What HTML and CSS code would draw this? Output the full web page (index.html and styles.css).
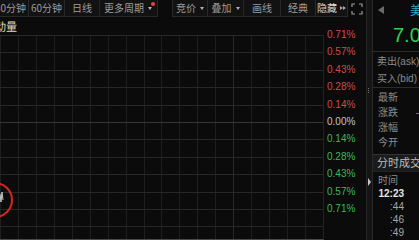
FILE: index.html
```html
<!DOCTYPE html>
<html lang="zh-CN">
  <head>
    <meta charset="UTF-8" />
    <title>分时图</title>
    <link rel="stylesheet" href="styles.css">
  </head>
  <body>
    <div class="app">
      <div class="main">
        <div class="toolbar">
          <span class="tb w36">30分钟</span>
          <span class="tb w36">60分钟</span>
          <span class="tb w35">日线</span>
          <span class="tb w58 more">更多周期<i class="caret"></i><i class="dot"></i></span>
          <span class="tb w35 gap">竞价<i class="caret"></i></span>
          <span class="tb w36">叠加<i class="caret"></i></span>
          <span class="tb w37">画线</span>
          <span class="tb w35">经典</span>
          <span class="tb w32 hide">隐藏<i class="ff"></i><i class="ff"></i></span>
          <span class="full">
            <svg width="12" height="12" viewBox="0 0 12 12">
              <path d="M1 4V1h3M8 1h3v3M11 8v3H8M4 11H1V8" fill="none" stroke="#9a9a9a" stroke-width="1.2"/>
            </svg>
          </span>
        </div>
        <div class="chart">
          <div class="plot">
            <div class="pane-title">动量</div>
            <div class="grid"></div>
            <svg class="mark" width="40" height="40" viewBox="0 0 40 40">
              <circle cx="15" cy="20" r="17" fill="none" stroke="#d8261e" stroke-width="2"/>
              <polyline points="8,23 12,19 14,24 16,21 18,6 19,18 20,14 21,22 22,12 23,20" fill="none" stroke="#c8c8c8" stroke-width="1"/>
            </svg>
          </div>
          <div class="axis">
            <div class="lbl up">0.71%</div>
            <div class="lbl up">0.57%</div>
            <div class="lbl up">0.43%</div>
            <div class="lbl up">0.28%</div>
            <div class="lbl up">0.14%</div>
            <div class="lbl zero">0.00%</div>
            <div class="lbl down">0.14%</div>
            <div class="lbl down">0.28%</div>
            <div class="lbl down">0.43%</div>
            <div class="lbl down">0.57%</div>
            <div class="lbl down">0.71%</div>
          </div>
        </div>
      </div>
      <div class="divider">
        <i class="grip"></i>
        <i class="pull"></i>
      </div>
      <div class="side">
        <div class="head"><i class="back"></i><span class="name">美</span></div>
        <div class="price">7.0</div>
        <div class="quote">
          <div class="q-row">卖出(ask)</div>
          <div class="q-row">买入(bid)</div>
        </div>
        <div class="info">
          <div class="i-row"><span class="k">最新</span></div>
          <div class="i-row"><span class="k">涨跌</span><span class="v down">-</span></div>
          <div class="i-row"><span class="k">涨幅</span></div>
          <div class="i-row"><span class="k">今开</span></div>
        </div>
        <div class="tab">分时成交</div>
        <div class="trades">
          <div class="t-row t-head">时间</div>
          <div class="t-row t-min">12:23</div>
          <div class="t-row">:44</div>
          <div class="t-row">:46</div>
          <div class="t-row">:49</div>
        </div>
      </div>
    </div>
  </body>
</html>
```

FILE: styles.css
```css
body {
  margin: 0;
  background-color: #0b0b0b;
  font-family: "Noto Sans CJK SC", "Liberation Sans", sans-serif;
  color: #9c9c9c;
  overflow: hidden;
}
.app {
  display: flex;
  width: 419px;
  height: 240px;
  overflow: hidden;
}
.main {
  width: 366px;
  flex-shrink: 0;
  display: flex;
  flex-direction: column;
}
.toolbar {
  display: flex;
  height: 17px;
  margin-left: -8px;
  margin-bottom: 2px;
}
.tb {
  position: relative;
  box-sizing: border-box;
  height: 17px;
  margin-right: -1px;
  border: 1px solid #282828;
  border-top: none;
  background-color: #121212;
  display: flex;
  align-items: center;
  justify-content: center;
  font-size: 10px;
  line-height: 1;
  flex-shrink: 0;
}
.w32 { width: 33px; }
.w35 { width: 36px; }
.w36 { width: 37px; }
.w37 { width: 38px; }
.w58 { width: 59px; }
.tb.gap {
  margin-left: 15px;
}
.caret {
  width: 0;
  height: 0;
  margin-left: 4px;
  border-left: 2px solid transparent;
  border-right: 2px solid transparent;
  border-top: 3px solid #b0b0b0;
}
.more {
  justify-content: flex-start;
  padding-left: 4px;
}
.dot {
  position: absolute;
  top: 2px;
  right: 2px;
  width: 4px;
  height: 4px;
  border-radius: 50%;
  background-color: #ee4038;
}
.hide {
  color: #d8d8d8;
}
.ff {
  width: 0;
  height: 0;
  border-top: 2.5px solid transparent;
  border-bottom: 2.5px solid transparent;
  border-left: 3px solid #a8a8a8;
}
.ff:first-of-type {
  margin-left: 3px;
}
.full {
  width: 19px;
  display: flex;
  align-items: center;
  justify-content: center;
  margin-left: 1px;
}
.chart {
  flex: 1;
  display: flex;
}
.plot {
  position: relative;
  width: 324px;
  display: flex;
  flex-direction: column;
}
.pane-title {
  height: 16px;
  line-height: 14px;
  font-size: 11px;
  color: #e2dab6;
  margin-left: -5px;
}
.grid {
  flex: 1;
  border-right: 1px solid #222;
  border-bottom: 1px solid #4a4a4a;
  background:
    linear-gradient(#363636, #363636) 0 87px / 100% 1px no-repeat,
    linear-gradient(#2a2a2a, #2a2a2a) 233px 0 / 1px 100% no-repeat,
    repeating-linear-gradient(to bottom, #272727 0, #272727 1px, transparent 1px, transparent 17.4px),
    repeating-linear-gradient(to right, #1e1e1e 0, #1e1e1e 1px, transparent 1px, transparent 17.94px);
}
.mark {
  position: absolute;
  left: -20px;
  top: 161px;
}
.axis {
  flex: 1;
  padding-top: 7px;
  padding-left: 3px;
  font-family: "Liberation Sans", sans-serif;
  font-size: 10px;
}
.lbl {
  height: 17.4px;
  line-height: 17.4px;
}
.up { color: #d24a46; }
.zero { color: #c4c4c4; }
.down { color: #3bb857; }
.divider {
  position: relative;
  width: 5px;
  flex-shrink: 0;
  background-color: #151515;
  border-left: 1px solid #262626;
  border-right: 1px solid #2a2a2a;
}
.grip {
  position: absolute;
  left: 1px;
  top: 88px;
  width: 2px;
  height: 5px;
  border-left: 1px dotted #777;
}
.pull {
  position: absolute;
  left: 1px;
  top: 178px;
  width: 0;
  height: 0;
  border-top: 4px solid transparent;
  border-bottom: 4px solid transparent;
  border-left: 3px solid #c8c8c8;
}
.side {
  flex: 1;
  min-width: 0;
  overflow: hidden;
  white-space: nowrap;
  font-family: "Liberation Sans", "Noto Sans CJK SC", sans-serif;
  font-size: 10px;
}
.head {
  height: 19px;
  display: flex;
  align-items: center;
  padding-left: 5px;
}
.back {
  width: 0;
  height: 0;
  border-top: 4.5px solid transparent;
  border-bottom: 4.5px solid transparent;
  border-right: 6px solid #6a6a6a;
}
.name {
  margin-left: 26px;
  font-size: 12px;
  color: #27aec4;
}
.price {
  height: 33px;
  line-height: 32px;
  padding-left: 20px;
  box-sizing: border-box;
  border-bottom: 1px solid #2c2c2c;
  font-size: 20px;
  color: #2fcf55;
}
.quote {
  padding-top: 1px;
  border-bottom: 1px solid #2c2c2c;
}
.q-row {
  height: 17px;
  line-height: 17px;
  padding-left: 4px;
  color: #8c8c8c;
}
.info {
  padding-top: 2px;
  padding-bottom: 4px;
}
.i-row {
  display: flex;
  height: 15px;
  line-height: 15px;
  padding-left: 5px;
  color: #8c8c8c;
}
.k {
  width: 39px;
}
.tab {
  height: 16px;
  line-height: 16px;
  padding-left: 4px;
  border-top: 1px solid #333;
  border-bottom: 1px solid #222;
  background-color: #1b1b1b;
  font-size: 11px;
  color: #bdbdbd;
}
.trades {
  padding-top: 2px;
  width: 31px;
}
.t-row {
  height: 13px;
  line-height: 13px;
  text-align: right;
  color: #a8a8a8;
}
.t-head {
  text-align: left;
  padding-left: 5px;
  color: #8c8c8c;
}
.t-min {
  font-weight: bold;
  color: #e6e6e6;
}
```
